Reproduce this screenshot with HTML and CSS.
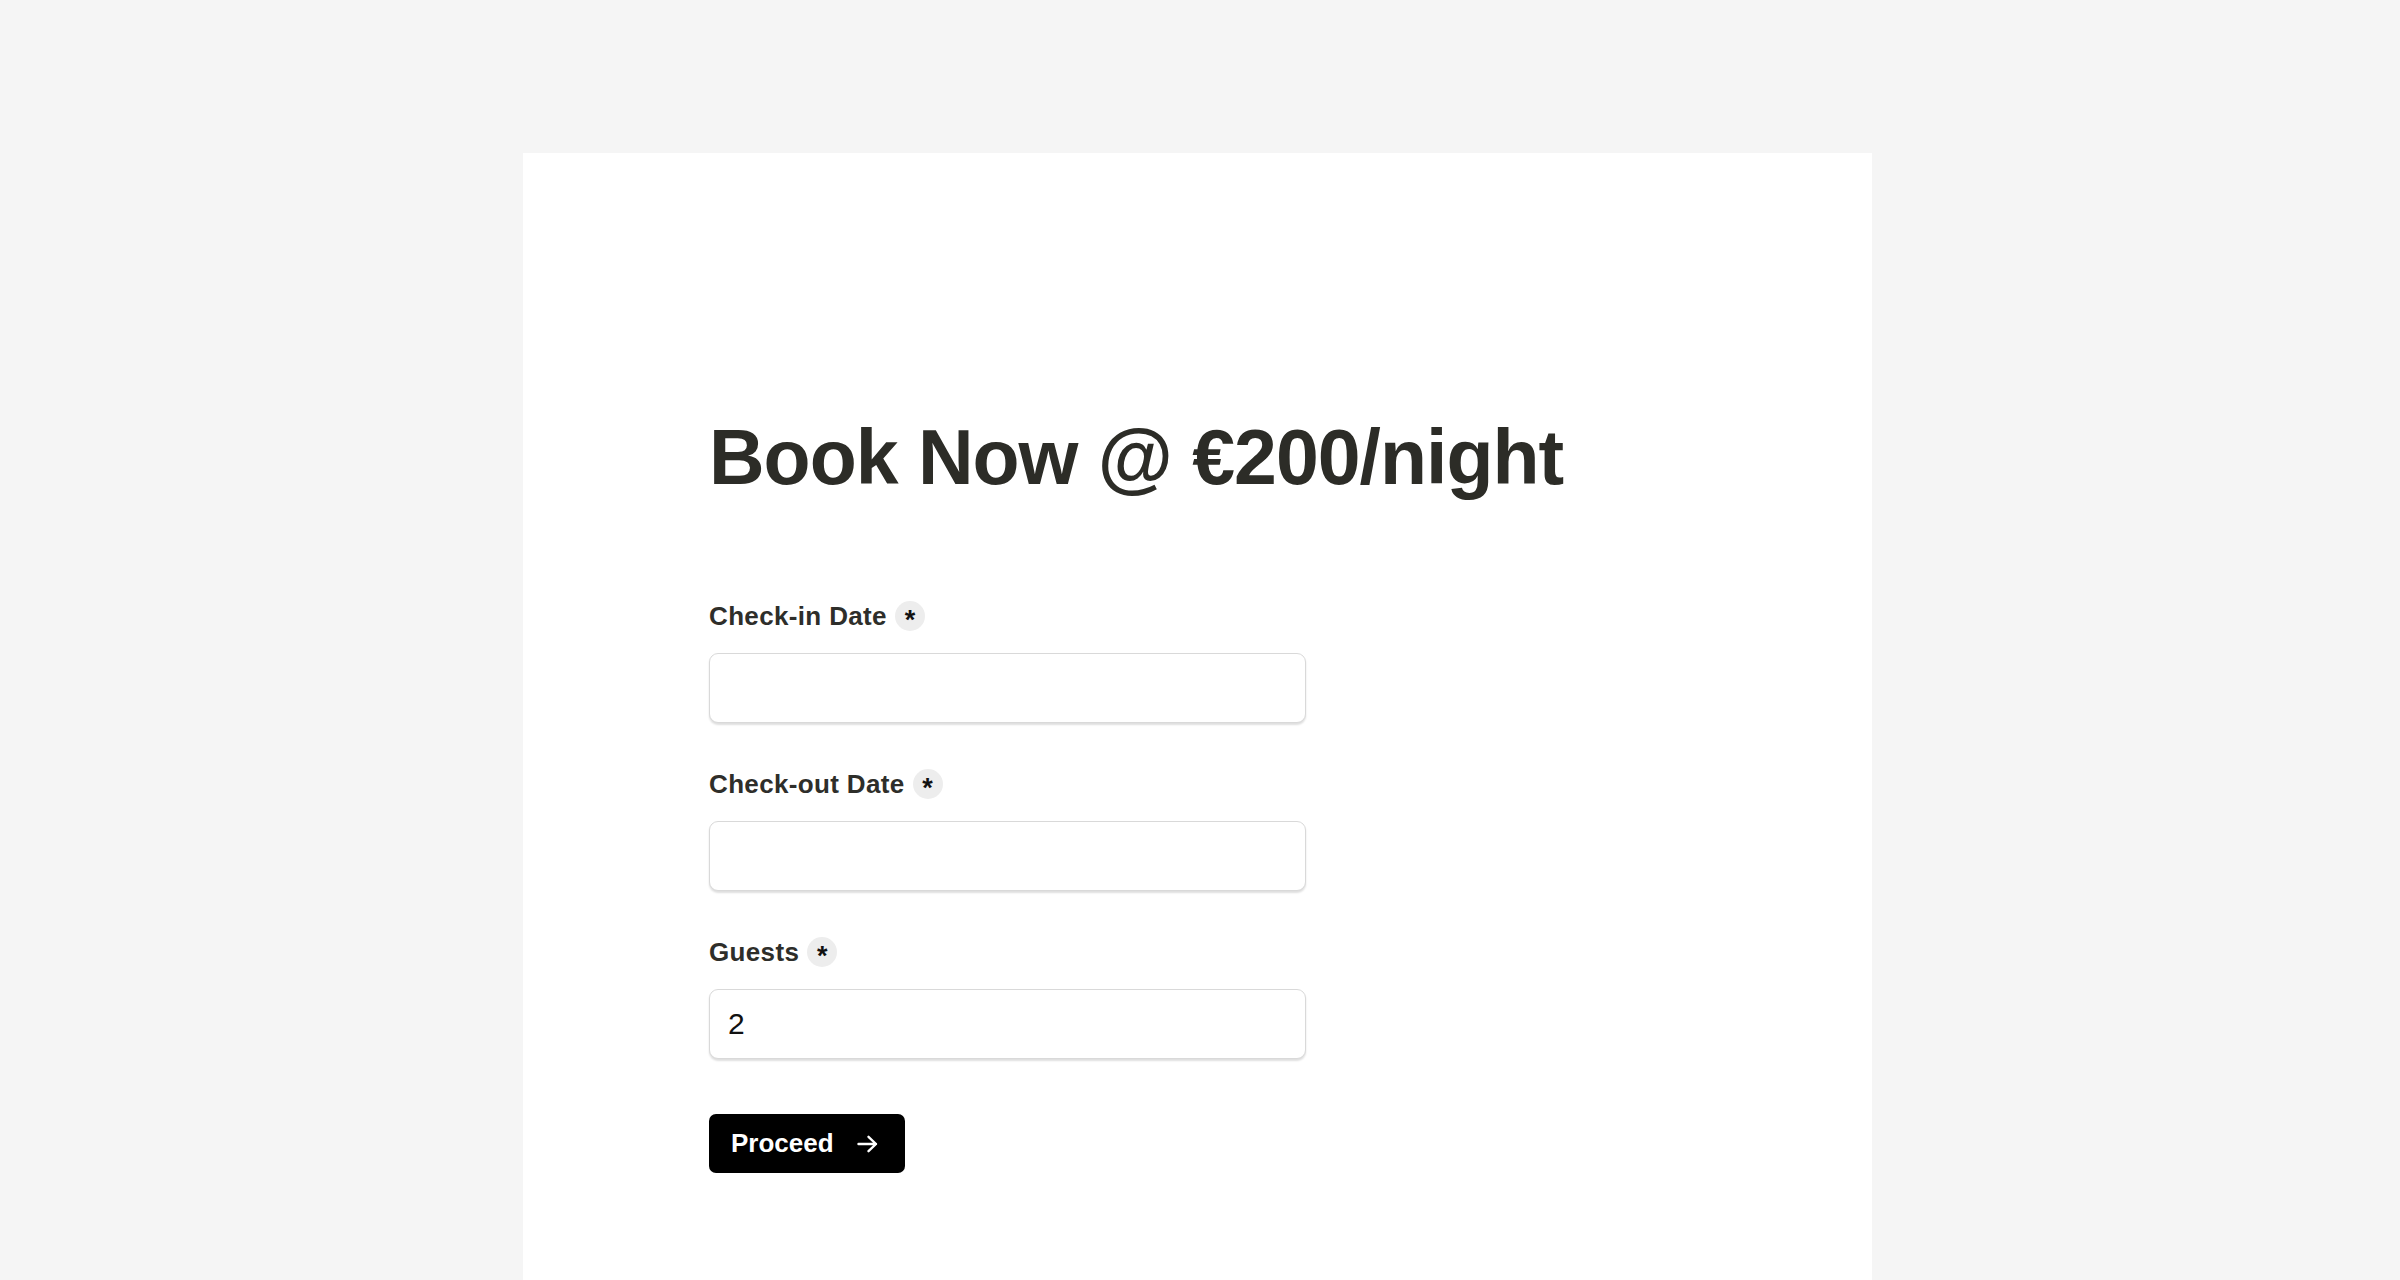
FILE: index.html
```html
<!DOCTYPE html>
<html lang="en">
<head>
<meta charset="utf-8">
<title>Book Now</title>
<link rel="stylesheet" href="styles.css">
</head>
<body>
<main class="card">
  <h1 class="title">Book Now @ €200/night</h1>
  <form class="form">
    <div class="field">
      <label class="label" for="checkin">Check-in Date <span class="req">*</span></label>
      <input class="input" id="checkin" type="text">
    </div>
    <div class="field">
      <label class="label" for="checkout">Check-out Date <span class="req">*</span></label>
      <input class="input" id="checkout" type="text">
    </div>
    <div class="field">
      <label class="label" for="guests">Guests <span class="req">*</span></label>
      <input class="input" id="guests" type="text" value="2">
    </div>
    <button class="btn" type="button">Proceed
      <svg class="arrow" width="21" height="18" viewBox="0 0 21 18"><path d="M1.5 9H19M11.5 1.8L19 9L11.5 16.2" fill="none" stroke="#fff" stroke-width="2.4" stroke-linecap="round" stroke-linejoin="round"/></svg>
    </button>
  </form>
</main>
</body>
</html>
```

FILE: styles.css
```css
html, body {
  margin: 0;
  padding: 0;
}
body {
  background: #f5f5f5;
  font-family: "Liberation Sans", Arial, sans-serif;
  overflow: hidden;
}
.card {
  box-sizing: border-box;
  width: 1349px;
  min-height: 1127px;
  margin: 153px 0 0 523px;
  background: #ffffff;
  padding: 258px 0 0 186px;
}
.title {
  margin: 0;
  font-size: 77px;
  line-height: 92px;
  font-weight: 700;
  letter-spacing: -1px;
  color: #2c2c27;
}
.form {
  margin-top: 98px;
  display: flex;
  flex-direction: column;
  align-items: flex-start;
  gap: 46px;
}
.field {
  display: flex;
  flex-direction: column;
  gap: 22px;
}
.label {
  display: flex;
  align-items: center;
  gap: 8px;
  height: 30px;
  font-size: 26px;
  line-height: 30px;
  font-weight: 700;
  color: #2e2e2a;
  letter-spacing: 0.35px;
}
.req {
  display: inline-flex;
  align-items: center;
  justify-content: center;
  width: 30px;
  height: 30px;
  border-radius: 50%;
  background: #ededed;
  color: #111;
  font-size: 27px;
  line-height: 1;
  padding-top: 9px;
  letter-spacing: 0;
  box-sizing: border-box;
}
.input {
  box-sizing: border-box;
  width: 597px;
  height: 70px;
  border: 1.5px solid #d9d9d9;
  border-radius: 9px;
  box-shadow: 0 2px 2px rgba(0, 0, 0, 0.13);
  padding: 0 18px;
  font-family: "Liberation Sans", Arial, sans-serif;
  font-size: 30px;
  color: #111;
  background: #fff;
  outline: none;
}
.btn {
  margin-top: 9px;
  display: inline-flex;
  align-items: center;
  gap: 23px;
  height: 59px;
  padding: 0 27px 0 22px;
  background: #000;
  color: #fff;
  border: none;
  border-radius: 7px;
  font-family: "Liberation Sans", Arial, sans-serif;
  font-size: 26px;
  font-weight: 700;
  cursor: pointer;
}
.arrow {
  display: block;
}
```
